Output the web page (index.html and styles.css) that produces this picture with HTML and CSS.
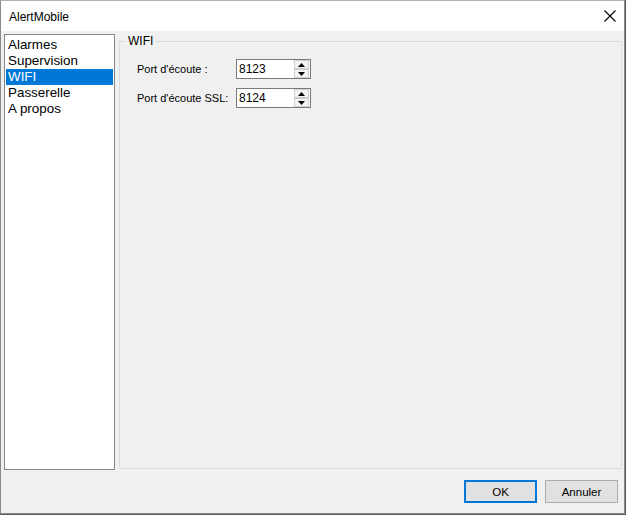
FILE: index.html
```html
<!DOCTYPE html>
<html lang="fr">
<head>
<meta charset="utf-8">
<title>AlertMobile</title>
<link rel="stylesheet" href="styles.css">
</head>
<body>
<div class="window">
  <div class="titlebar">
    <span class="title">AlertMobile</span>
    <svg class="close" width="12" height="12" viewBox="0 0 12 12"><path d="M0.5 0.5 L11.5 11.5 M11.5 0.5 L0.5 11.5" stroke="#000" stroke-width="1.1" fill="none"/></svg>
  </div>
  <div class="body">
    <div class="main">
      <ul class="list">
        <li>Alarmes</li>
        <li>Supervision</li>
        <li class="sel">WIFI</li>
        <li>Passerelle</li>
        <li>A propos</li>
      </ul>
      <fieldset class="group">
        <legend>WIFI</legend>
        <div class="row">
          <span class="label">Port d'écoute :</span>
          <div class="spin">
            <span class="val">8123</span>
            <div class="btns">
              <span class="sbtn"><svg width="7" height="4" viewBox="0 0 7 4"><path d="M3.5 0 L7 4 L0 4 Z" fill="#000"/></svg></span>
              <span class="sbtn"><svg width="7" height="4" viewBox="0 0 7 4"><path d="M0 0 L7 0 L3.5 4 Z" fill="#000"/></svg></span>
            </div>
          </div>
        </div>
        <div class="row">
          <span class="label">Port d'écoute SSL:</span>
          <div class="spin">
            <span class="val">8124</span>
            <div class="btns">
              <span class="sbtn"><svg width="7" height="4" viewBox="0 0 7 4"><path d="M3.5 0 L7 4 L0 4 Z" fill="#000"/></svg></span>
              <span class="sbtn"><svg width="7" height="4" viewBox="0 0 7 4"><path d="M0 0 L7 0 L3.5 4 Z" fill="#000"/></svg></span>
            </div>
          </div>
        </div>
      </fieldset>
    </div>
    <div class="footer">
      <button class="btn ok">OK</button>
      <button class="btn">Annuler</button>
    </div>
  </div>
</div>
</body>
</html>
```

FILE: styles.css
```css
html, body {
  margin: 0;
  padding: 0;
  background: #5a5a5a;
  width: 626px;
  height: 515px;
  overflow: hidden;
}
body {
  font-family: "Liberation Sans", Arial, sans-serif;
}
.window {
  box-sizing: border-box;
  width: 625px;
  height: 514px;
  border: 1px solid #8a8a8a;
  border-top: 1px solid #b0b0b0;
  background: #f0f0f0;
  display: flex;
  flex-direction: column;
}
.titlebar {
  height: 30px;
  background: #fff;
  display: flex;
  align-items: center;
  justify-content: space-between;
  padding: 0 8px 0 8px;
  flex: none;
}
.title {
  font-size: 12px;
  color: #000;
  padding-top: 1px;
}
.body {
  flex: 1;
  display: flex;
  flex-direction: column;
  padding: 3px 2px 0 3px;
}
.main {
  display: flex;
  gap: 4px;
  height: 436px;
}
.list {
  box-sizing: border-box;
  width: 111px;
  height: 436px;
  margin: 0;
  padding: 2px 1px;
  list-style: none;
  background: #fff;
  border: 1px solid #828790;
  font-size: 13.4px;
  color: #000;
}
.list li {
  height: 16px;
  line-height: 16px;
  padding-left: 2px;
}
.list li.sel {
  background: #0078d7;
  color: #fff;
}
.group {
  flex: 1;
  box-sizing: border-box;
  margin: 0;
  height: 435px;
  border: 1px solid #dcdcdc;
  padding: 11px 0 0 0;
  min-width: 0;
}
.group legend {
  font-size: 12px;
  padding: 0 2px;
  margin-left: 6px;
  line-height: 14px;
  color: #000;
}
.row {
  display: flex;
  align-items: center;
  height: 20px;
  margin: 0 0 9px 17px;
}
.label {
  width: 99px;
  font-size: 11px;
  color: #000;
}
.spin {
  box-sizing: border-box;
  width: 75px;
  height: 20px;
  border: 1px solid #7a7a7a;
  background: #fff;
  display: flex;
  align-items: center;
  justify-content: space-between;
  padding: 0 0 0 2px;
}
.val {
  font-size: 12px;
  color: #000;
}
.btns {
  display: flex;
  flex-direction: column;
  width: 15px;
  height: 18px;
  margin-right: 1px;
}
.sbtn {
  flex: 1;
  box-sizing: border-box;
  border: 1px solid #cfcfcf;
  background: #f3f3f3;
  display: flex;
  align-items: center;
  justify-content: center;
}
.footer {
  display: flex;
  justify-content: flex-end;
  gap: 8px;
  padding: 10px 4px 0 0;
}
.btn {
  box-sizing: border-box;
  width: 73px;
  height: 23px;
  background: #e1e1e1;
  border: 1px solid #adadad;
  font-family: "Liberation Sans", Arial, sans-serif;
  font-size: 11.5px;
  color: #000;
  padding: 0;
  margin: 0;
}
.btn.ok {
  border: 2px solid #0078d7;
}
```
